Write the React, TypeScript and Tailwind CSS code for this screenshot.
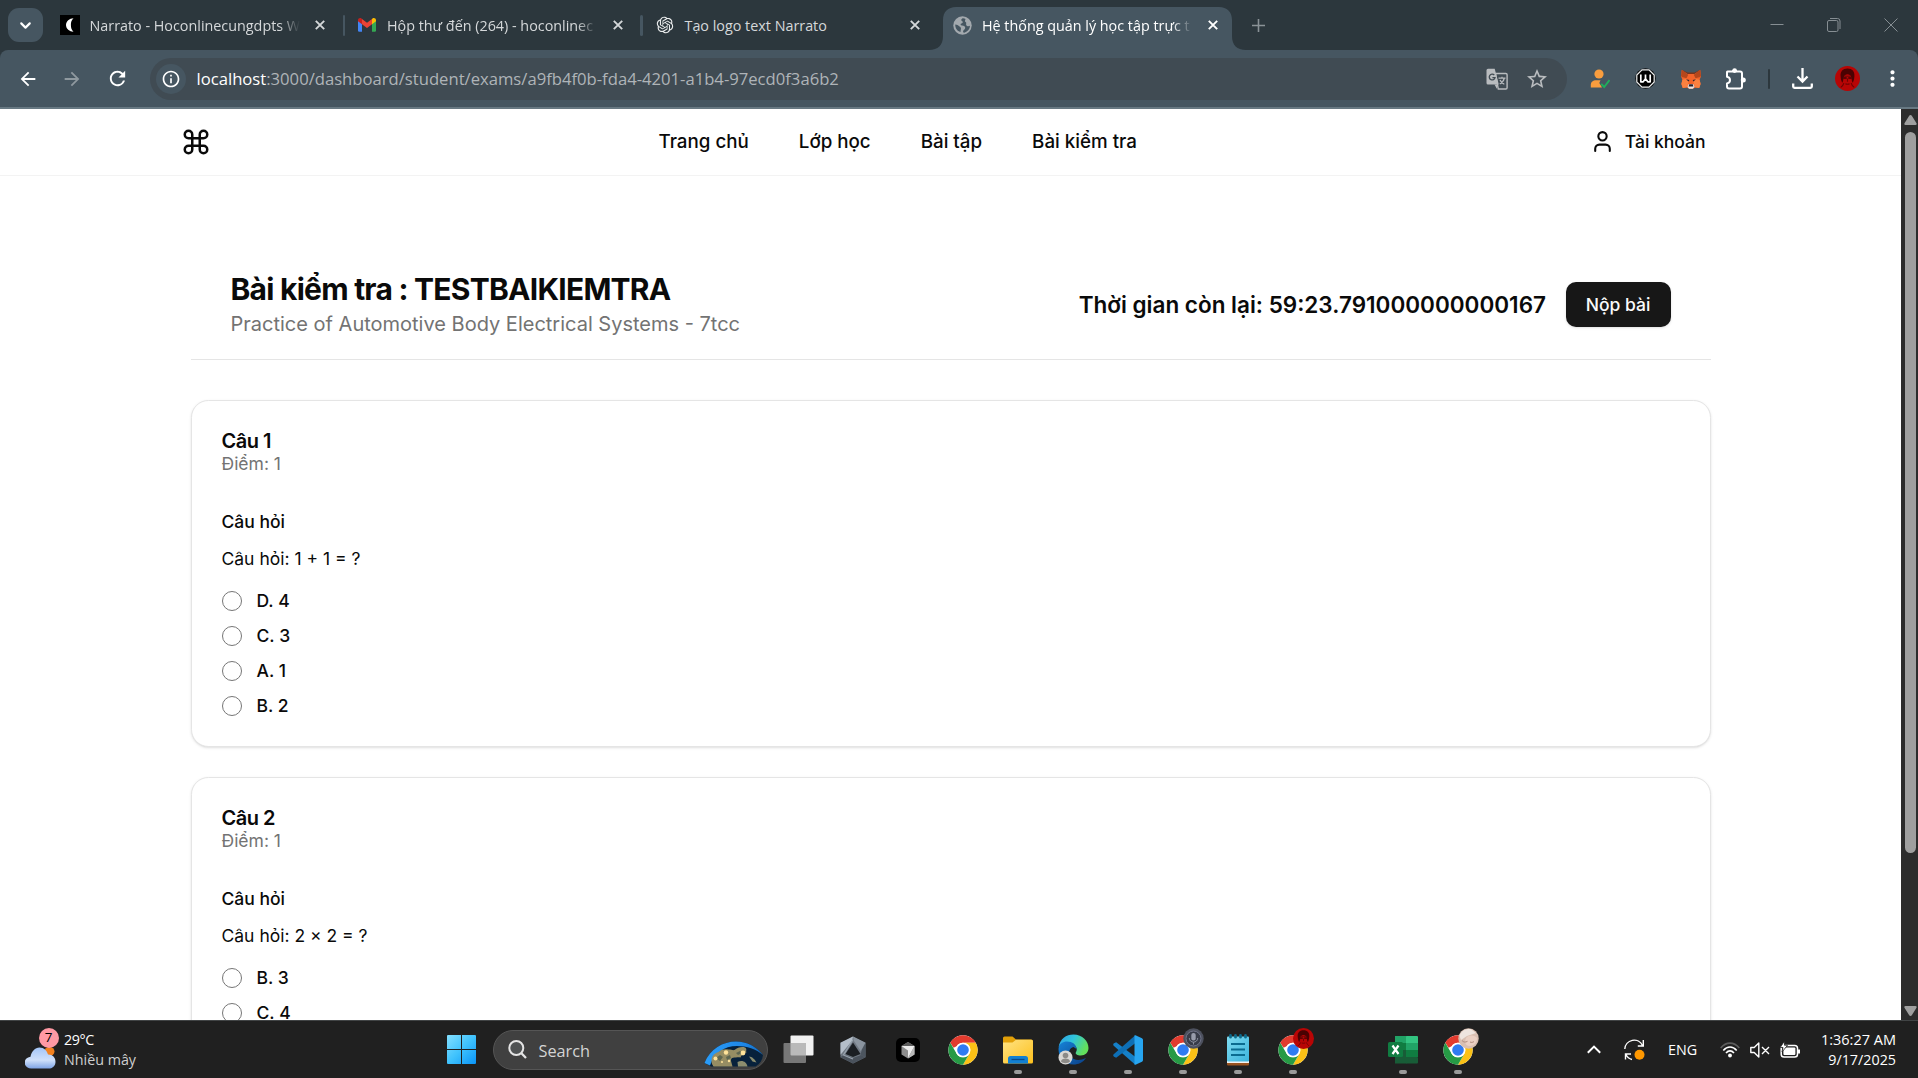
import type { ReactNode } from "react";
import { ChevronDown, Command, User } from "lucide-react";
import { MdArrowBack, MdArrowForward, MdInfoOutline, MdMoreVert, MdRefresh, MdStarBorder } from "react-icons/md";
import { RiOpenaiFill } from "react-icons/ri";

/* ---------- Favicons ---------- */

function NarratoIcon() {
  return (
    <svg width="20" height="20" viewBox="0 0 20 20">
      <rect width="20" height="20" fill="#000" />
      <path d="M13.500 3.200c-4 0-7.500 3-7.500 6.800s3.500 6.600 7.500 6.800c-2-1.800-2.600-4-2.600-6.800s.6-5 2.600-6.800z" fill="#fff" />
    </svg>
  );
}

function GmailIcon() {
  return (
    <svg width="20" height="20" viewBox="0 0 20 20">
      <path d="M1 5v10.500a1.200 1.200 0 0 0 1.200 1.200H5V8z" fill="#4285f4" />
      <path d="M19 5v10.500a1.200 1.200 0 0 1-1.200 1.200H15V8z" fill="#34a853" />
      <path d="M1 5.200C1 3.300 3.200 2.500 4.500 3.600L5 4v5.200L1 6.300z" fill="#c5221f" />
      <path d="M19 5.200c0-1.900-2.200-2.700-3.500-1.600L15 4v5.200l4-2.900z" fill="#fbbc04" />
      <path d="M5 4l5 3.800L15 4v5.200l-5 3.800-5-3.800z" fill="#ea4335" />
    </svg>
  );
}

function GlobeIcon() {
  return (
    <svg width="19" height="19" viewBox="0 0 19 19">
      <circle cx="9.500" cy="9.500" r="9.200" fill="#a3a9ae" />
      <path d="M9.600 2.300c-1.600.9-1.800 2.300-.5 2.900 1.700.7.300 2-.9 2.300-1.200.4-.7 1.900.8 1.900 2.200 0 3.300.9 3.200 2.400 0 1.600-1.400 1.700-2 3.200-.4 1 .2 1.800 1.100 1.700 3.600-1 5.600-3.600 5.700-6.900-1.700.8-3.300.3-3.800-.9-.5-1.400.7-2.200-.4-2.700-1.500-.7-.6-2.400-.2-3.300-1-.5-2-.7-3-.6z" fill="#465661" />
      <path d="M2.300 8.500c1.900.1 3.600 1.300 5 2.600 1.300 1.200.3 2.300.2 4.900-3.300-.8-5.500-3.900-5.200-7.500z" fill="#465661" />
    </svg>
  );
}

function CloseX({ bright = false }: { bright?: boolean }) {
  return (
    <svg width="10" height="10" viewBox="0 0 10 10" stroke={bright ? "#ffffff" : "#d4d7d9"} strokeWidth="1.900">
      <path d="M.8.8l8.400 8.400M9.200.8L.8 9.200" />
    </svg>
  );
}

function Tab({ icon, title, active = false, fade = false }: { icon: ReactNode; title: string; active?: boolean; fade?: boolean }) {
  return (
    <div className="relative flex h-[43px] w-[289.5px] shrink-0 items-start">
      {active && (
        <svg className="absolute -left-[14px] top-0" width="318" height="43" viewBox="0 0 318 43">
          <path d="M0 43c9 0 14-5 14-14V13C14 5 19 0 27 0h263c8 0 13 5 13 13v16c0 9 5 14 14 14z" fill="#465661" />
        </svg>
      )}
      <div className="relative flex h-9 w-full items-center pl-[9px]">
        <span className="flex w-5 shrink-0 justify-center">{icon}</span>
        <span
          className={
            "ml-[10px] w-[212px] shrink-0 whitespace-nowrap pt-[1.500px] font-['Open_Sans',sans-serif] text-[14.35px] leading-6 " +
            (fade ? "[mask-image:linear-gradient(90deg,#000_190px,transparent_210px)] " : "") +
            (active ? "text-white" : "text-[#d5d8da]")
          }
        >
          {title}
        </span>
        <span className="ml-[13.500px]">
          <CloseX bright={active} />
        </span>
      </div>
    </div>
  );
}

function TabDivider({ hidden = false }: { hidden?: boolean }) {
  return (
    <div className="flex h-9 w-2 shrink-0 items-center justify-center self-start">
      {!hidden && <div className="h-[21px] w-[2.500px] rounded-full bg-[#465661]" />}
    </div>
  );
}

function TabStrip() {
  return (
    <div className="flex h-[50px] items-center bg-[#2c373d]">
      <div className="ml-2 flex h-[34px] w-[35px] items-center justify-center rounded-[11px] bg-[#465661] text-white">
        <ChevronDown size={17} strokeWidth={3} />
      </div>
      <div className="ml-[7.500px] flex items-center self-end">
        <Tab icon={<NarratoIcon />} title="Narrato - Hoconlinecungdpts W" fade />
        <TabDivider />
        <Tab icon={<GmailIcon />} title="Hộp thư đến (264) - hoconlinec" fade />
        <TabDivider />
        <Tab icon={<RiOpenaiFill size={20} color="#eceeef" />} title="Tạo logo text Narrato" />
        <TabDivider hidden />
        <Tab icon={<GlobeIcon />} title="Hệ thống quản lý học tập trực t" active fade />
      </div>
      <svg className="ml-[19px]" width="13" height="13" viewBox="0 0 13 13" stroke="#8a9297" strokeWidth="1.600">
        <path d="M6.500 0v13M0 6.500h13" />
      </svg>
      <div className="ml-auto mr-[20px] flex items-center gap-[43px]">
        <svg width="14" height="14" viewBox="0 0 14 14" stroke="#868e93" fill="none">
          <path d="M.5 6.500h13" />
        </svg>
        <svg width="14" height="14" viewBox="0 0 14 14" stroke="#868e93" fill="none">
          <rect x=".5" y="2.500" width="10.500" height="11" rx="1.500" />
          <path d="M3 .5h7.500a2.500 2.500 0 0 1 2.500 2.500v8" />
        </svg>
        <svg width="14" height="14" viewBox="0 0 14 14" stroke="#868e93" fill="none">
          <path d="M.5.5l13 13M13.500.5l-13 13" />
        </svg>
      </div>
    </div>
  );
}

/* ---------- Toolbar ---------- */

function TranslateIcon() {
  return (
    <svg width="22" height="22" viewBox="0 0 22 22">
      <path d="M9.500 5.500h10.300a1.300 1.300 0 0 1 1.300 1.300v12.900a1.300 1.300 0 0 1-1.300 1.300h-7.500z" fill="none" stroke="#b9bcbf" strokeWidth="1.400" />
      <path d="M2 .8h6.700l4.100 15.700H2A1.500 1.500 0 0 1 .5 15V2.300A1.500 1.500 0 0 1 2 .8z" fill="#b9bcbf" />
      <path d="M12 16.500l-1.200 4.300-2.300-4.300z" fill="#b9bcbf" />
      <path d="M8.300 7a2.900 2.900 0 1 0 .7 2.600H6.400" fill="none" stroke="#404b53" strokeWidth="1.300" />
      <path d="M12.500 10.200h7M16 8.800v1.400M18.300 10.200c-.5 2.600-2.400 4.600-4.500 5.700M14 12c.8 1.800 2.200 3.200 4.300 4.200" fill="none" stroke="#b9bcbf" strokeWidth="1.200" />
    </svg>
  );
}

function PersonCheckIcon() {
  return (
    <svg width="20" height="20" viewBox="0 0 20 20">
      <circle cx="9" cy="5" r="4.600" fill="#f99d3e" />
      <path d="M.8 18.500V16c0-3.200 2.300-4.800 5.200-4.800h4.500l-1.200 2.800 2.700 4.500z" fill="#f99d3e" />
      <path d="M11.200 14.800l3 3.200 5.300-7" fill="none" stroke="#1fae5b" strokeWidth="1.900" />
    </svg>
  );
}

function WIcon() {
  return (
    <svg width="21" height="21" viewBox="0 0 21 21">
      <circle cx="10.500" cy="10.500" r="10.200" fill="#0b0b0b" />
      <path d="M7 1.800h7l5.200 5.200v7L14 19.200H7L1.800 14V7z" fill="#000" stroke="#eef0f1" strokeWidth="1.200" />
      <path d="M5.800 6.500v7.300h2.400l2.300-3 2.300 3h2.400V6.500M10.500 6.500v4.300" fill="none" stroke="#fff" strokeWidth="1.700" strokeLinejoin="round" />
    </svg>
  );
}

function FoxIcon() {
  return (
    <svg width="20" height="20" viewBox="0 0 20 20">
      <path d="M.8.800L6.500 4.800h7L19.200.8 20 7.500l-1.400 3.200 1 4.300-1.400 4-4.200-.6-2 1.300H8l-2-1.300-4.200.6-1.400-4 1-4.300L0 7.500z" fill="#f4642a" />
      <path d="M.8.8l6.400 5-1.700 3.400L.8 8 0 6.500zM19.200.8l-6.400 5 1.700 3.400L19.200 8l.8-1.500z" fill="#b5471c" />
      <path d="M.8.8l6 4.300h6.400l6-4.300-5.700 2.700h-7z" fill="#78341c" />
      <path d="M1.400 10.700l4.600-.9 1.500 3.500L6 18.200l-4.200.8-1.400-4zM18.600 10.700l-4.600-.9-1.500 3.500 1.500 4.900 4.200.8 1.400-4z" fill="#fb8140" />
      <path d="M5 10.200l3.300.8-.7 1.500zM15 10.200l-3.300.8.7 1.500z" fill="#2b2530" />
      <path d="M7 16l1-1h4l1 1 .5 2-1.700 1.700H8.200L6.500 18z" fill="#e9e4e2" />
      <path d="M8.200 15.200h3.600l.6 2.200H7.600z" fill="#2b2028" />
    </svg>
  );
}

function PuzzleIcon() {
  return (
    <svg width="23" height="24" viewBox="0 0 23 24" fill="none" stroke="#fff" strokeWidth="2">
      <path d="M3.500 4.500H16a2 2 0 0 1 2 2V19.500a2 2 0 0 1-2 2H5a2 2 0 0 1-2-2V16.500c1.800-.3 3-1.700 3-3.400s-1.200-3.100-3-3.400V5z" strokeLinejoin="round" />
      <path d="M7.800 4.200a3 3 0 0 1 5.600 0zM18.300 10.200a3 3 0 0 1 0 5.600z" fill="#fff" stroke="none" />
      <circle cx="10.600" cy="3.600" r="2.300" fill="#fff" stroke="none" />
      <circle cx="19.300" cy="13" r="2.500" fill="#fff" stroke="none" />
    </svg>
  );
}

function RedAvatar({ size }: { size: number }) {
  return (
    <svg width={size} height={size} viewBox="0 0 24 24">
      <circle cx="12" cy="12" r="12" fill="#b80505" />
      <path d="M12 2.500c4.500 0 7 2.800 6.600 7.500-.2 3-1 5-1.600 6-.8-1-1-3-1.200-5-.8-2-2-3-3.800-3S9 9 8.200 11c-.2 2-.4 4-1.200 5-.6-1-1.400-3-1.600-6C5 5.300 7.500 2.500 12 2.500z" fill="#4a0202" />
      <path d="M7.500 10.500h3.700v2H8zM12.800 10.500h3.700l-.5 2h-3.200z" fill="#5f0202" />
      <path d="M8.500 9.300c2 .6 5 .6 7 0" stroke="#720404" fill="none" />
      <path d="M10 17c1.200.6 2.800.6 4 0M12 12v3M8.500 16.500c-.5 2-1.500 3-3 4M15.500 16.500c.5 2 1.500 3 3 4" stroke="#6e0303" strokeWidth="1.100" fill="none" />
    </svg>
  );
}

function Slot({ w, children }: { w: string; children: ReactNode }) {
  return <div className={"flex shrink-0 items-center justify-center " + w}>{children}</div>;
}

function Toolbar() {
  return (
    <div className="bg-[#2c373d]">
      <div className="flex h-[59px] items-center rounded-t-lg border-b-2 border-[#687983] bg-[#465661]">
        <div className="flex w-[150px] items-center pl-[5.500px] text-white">
          <Slot w="w-[44px]"><MdArrowBack size={22} /></Slot>
          <Slot w="w-[45px]"><MdArrowForward size={22} color="#8f999f" /></Slot>
          <Slot w="w-[45px]"><MdRefresh size={23} /></Slot>
        </div>
        <div className="flex h-[42px] w-[1417px] items-center rounded-full bg-[#404b53]">
          <div className="ml-[5.500px] flex size-[30px] items-center justify-center rounded-full bg-[#465661] text-white">
            <MdInfoOutline size={20} />
          </div>
          <div className="ml-[11px] mt-[2px] whitespace-nowrap font-['Open_Sans',sans-serif] text-[16.65px] text-[#afb4b8]">
            <span className="text-white">localhost</span>:3000/dashboard/student/exams/a9fb4f0b-fda4-4201-a1b4-97ecd0f3a6b2
          </div>
          <div className="ml-auto mr-[18.500px] flex items-center gap-[17px]">
            <TranslateIcon />
            <MdStarBorder size={24} color="#b9bcbf" />
          </div>
        </div>
        <div className="flex items-center pl-[10px] text-white">
          <Slot w="w-[45px]"><PersonCheckIcon /></Slot>
          <Slot w="w-[46px]"><WIcon /></Slot>
          <Slot w="w-[45px]"><FoxIcon /></Slot>
          <Slot w="w-[45px]"><PuzzleIcon /></Slot>
          <Slot w="w-[21px]"><div className="h-5 w-[2px] rounded-full bg-[#2c373d]" /></Slot>
          <Slot w="w-[46px]">
            <svg width="21" height="21" viewBox="0 0 21 21" fill="none" stroke="#fff" strokeWidth="2.300">
              <path d="M10.500 0v13M5.500 8.500l5 5 5-5M1.200 15.500v3a1.300 1.300 0 0 0 1.300 1.300h16a1.300 1.300 0 0 0 1.300-1.300v-3" />
            </svg>
          </Slot>
          <Slot w="w-[45px]"><RedAvatar size={25} /></Slot>
          <Slot w="w-[44px]"><MdMoreVert size={25} /></Slot>
        </div>
      </div>
    </div>
  );
}

/* ---------- Page ---------- */

function SiteHeader() {
  return (
    <header className="flex h-[66.500px] shrink-0 items-center border-b border-[#f3f3f3] pl-[181px] pr-[195.500px] text-[#0a0a0a]">
      <div className="w-[477.500px]">
        <Command size={30} />
      </div>
      <nav className="flex gap-[50px] whitespace-nowrap text-[18.75px] font-medium leading-7">
        <span>Trang chủ</span>
        <span>Lớp học</span>
        <span>Bài tập</span>
        <span>Bài kiểm tra</span>
      </nav>
      <div className="ml-auto flex items-center gap-[10px] text-[17.5px] font-medium">
        <User size={25} />
        <span className="pt-px">Tài khoản</span>
      </div>
    </header>
  );
}

function Question({ n, text, options }: { n: number; text: string; options: string[] }) {
  return (
    <section className="shrink-0 rounded-[17.5px] border border-[#e5e5e5] bg-white p-[30px] text-[17.5px] leading-[25px] text-[#0a0a0a] shadow-[0_1px_3px_rgba(0,0,0,0.1),0_1px_2px_-1px_rgba(0,0,0,0.1)]">
      <h2 className="text-xl font-semibold leading-5 tracking-tight">Câu {n}</h2>
      <p className="text-[#737373]">Điểm: 1</p>
      <p className="mt-[31px] font-medium leading-[30px]">Câu hỏi</p>
      <p className="mt-[9px]">{text}</p>
      <div className="mt-5 flex flex-col gap-[15px]">
        {options.map((o) => (
          <label key={o} className="flex h-5 items-center gap-[15px] font-medium">
            <span className="size-5 rounded-full border border-[#767676] bg-white" />
            <span className="pb-[2px]">{o}</span>
          </label>
        ))}
      </div>
    </section>
  );
}

function Page() {
  return (
    <div className="flex h-[911px]">
      <div className="flex w-[1901px] flex-col overflow-hidden bg-white font-['Inter',sans-serif]">
        <SiteHeader />
        <main className="flex min-h-0 flex-1 flex-col gap-[30px] overflow-hidden px-[190.500px] pt-[93.500px]">
          <div className="mb-[10px] flex h-[91px] shrink-0 items-start justify-between border-b border-[#e5e5e5] px-10 text-[#0a0a0a]">
            <div>
              <h1 className="text-3xl font-bold leading-10 tracking-tight">Bài kiểm tra : TESTBAIKIEMTRA</h1>
              <p className="text-xl leading-[30px] text-[#737373]">Practice of Automotive Body Electrical Systems - 7tcc</p>
            </div>
            <div className="flex h-[70px] items-center gap-[19.500px]">
              <div className="pt-[2px] text-[22.5px] font-semibold">Thời gian còn lại: 59:23.791000000000167</div>
              <button className="h-[45px] w-[105px] rounded-[10px] bg-[#171717] pt-[2px] text-[17.5px] font-medium text-[#fafafa] shadow">Nộp bài</button>
            </div>
          </div>
          <Question n={1} text="Câu hỏi: 1 + 1 = ?" options={["D. 4", "C. 3", "A. 1", "B. 2"]} />
          <Question n={2} text="Câu hỏi: 2 × 2 = ?" options={["B. 3", "C. 4"]} />
        </main>
      </div>
      <div className="flex w-[17px] flex-col items-center bg-[#2c2c2c] pl-[2px]">
        <svg className="mt-[6px]" width="13" height="10" viewBox="0 0 13 10" fill="#9f9f9f">
          <path d="M6.500 0c.6 0 1 .3 1.300.8l4.700 7.500c.5.900 0 1.700-1 1.700h-10c-1 0-1.500-.8-1-1.700L5.200.8c.3-.5.700-.8 1.300-.8z" />
        </svg>
        <div className="mt-[7px] h-[721px] w-[11px] rounded-full bg-[#9f9f9f]" />
        <svg className="mt-auto mb-[4px]" width="13" height="10" viewBox="0 0 13 10" fill="#9f9f9f">
          <path d="M6.500 10c.6 0 1-.3 1.300-.8l4.700-7.500c.5-.9 0-1.700-1-1.700h-10C.5 0 0 .8.5 1.700l4.700 7.500c.3.500.7.800 1.300.8z" />
        </svg>
      </div>
    </div>
  );
}

/* ---------- Taskbar ---------- */

function ChromeIcon() {
  return (
    <svg width="32" height="32" viewBox="0 0 48 48">
      <circle cx="24" cy="24" r="22" fill="#fff" />
      <path d="M4.950 13A22 22 0 0 1 43.050 13H24A11 11 0 0 0 14.500 18.500L9.800 20.500z" fill="#e33b2e" />
      <path d="M43.050 13A22 22 0 0 1 24 46L33.530 29.500A11 11 0 0 0 24 13z" fill="#fbc116" />
      <path d="M24 46A22 22 0 0 1 4.950 13L14.470 29.500A11 11 0 0 0 33.530 29.500z" fill="#269a45" />
      <circle cx="24" cy="24" r="11" fill="#fff" />
      <circle cx="24" cy="24" r="8.700" fill="#2f7bf2" />
    </svg>
  );
}

function ChromeWithBadge({ children }: { children: ReactNode }) {
  return (
    <div className="relative">
      <ChromeIcon />
      <div className="absolute -right-[5px] -top-[6px]">{children}</div>
    </div>
  );
}

function MicBadge() {
  return (
    <svg width="21" height="21" viewBox="0 0 21 21">
      <circle cx="10.500" cy="10.500" r="10.200" fill="#4d515e" />
      <circle cx="10.500" cy="10.500" r="7.500" fill="#383c49" stroke="#71758a" />
      <rect x="8.300" y="5" width="4.400" height="7.500" rx="2" fill="#989cab" />
      <path d="M6.300 10c0 5.500 8.400 5.500 8.400 0M10.500 14v2.500" stroke="#898d9c" fill="none" />
    </svg>
  );
}

function BabyBadge() {
  return (
    <svg width="21" height="21" viewBox="0 0 21 21">
      <circle cx="10.500" cy="10.500" r="10.200" fill="#d9bfb1" />
      <path d="M1.500 8C3 3 8 .3 13 1.200l5 3.800-9 3-6 4z" fill="#efe5df" />
      <path d="M8 10c3-3.500 9-3 11 0 0 5-3.500 8-7.500 8S6 14 8 10z" fill="#ebd0c3" />
      <path d="M4 12.500c1.500 1.800 3.500 2 5.500.8M12 14c1.500.7 3 .4 4-.5" stroke="#b18c7e" strokeWidth="1" fill="none" />
    </svg>
  );
}

function FolderIcon() {
  return (
    <svg width="30" height="30" viewBox="0 0 30 30">
      <defs>
        <linearGradient id="fold" x1="0" y1="0" x2="1" y2="1">
          <stop offset="0" stopColor="#ffe383" />
          <stop offset="1" stopColor="#fdc01d" />
        </linearGradient>
      </defs>
      <path d="M0 3a1.500 1.500 0 0 1 1.500-1.500h8L13 4.500h15a2 2 0 0 1 2 2v6H0z" fill="#e2a008" />
      <path d="M0 7.500h9.500L13 4.700h15.500A1.500 1.500 0 0 1 30 6.200v20.800a1.500 1.500 0 0 1-1.500 1.500h-27A1.500 1.500 0 0 1 0 27z" fill="url(#fold)" />
      <path d="M5 28.500v-5A2.500 2.500 0 0 1 7.500 21h15a2.500 2.500 0 0 1 2.500 2.500v5z" fill="#1280d2" />
      <path d="M8.500 24.500h13" stroke="#0a4a8a" strokeWidth="1.300" />
    </svg>
  );
}

function EdgeIcon() {
  return (
    <svg width="31" height="31" viewBox="0 0 31 31">
      <defs>
        <linearGradient id="edgeTop" x1="0" y1="0" x2="1" y2=".4">
          <stop offset="0" stopColor="#2f9fe5" />
          <stop offset=".5" stopColor="#30c5dc" />
          <stop offset="1" stopColor="#63df5c" />
        </linearGradient>
        <linearGradient id="edgeLow" x1="0" y1="0" x2="1" y2="1">
          <stop offset="0" stopColor="#1683d8" />
          <stop offset="1" stopColor="#0b3f86" />
        </linearGradient>
      </defs>
      <path d="M.6 13C2 5 8 .5 15.500.5 24.500.5 30.500 7 30.500 14c0 4.500-3.300 7.500-7.700 7.500-3.500 0-5.800-1.500-5-3 2.700-3.800-.3-8-5.300-8C7 8 2.500 10 .6 13z" fill="url(#edgeTop)" />
      <path d="M.5 15C1 9.500 5 7.500 9 7.500c5.500 0 9.500 3 9.500 7.500l-3-2c-4 1-5.500 5-3 9 3 4.500 9 5 15.500 2C25 28.500 20.500 30.500 15.500 30.500 7 30.500.5 24 .5 15z" fill="url(#edgeLow)" />
      <circle cx="7.500" cy="23.500" r="7" fill="#d9d7d4" />
      <circle cx="7.500" cy="21.500" r="2.800" fill="#8c8a87" />
      <path d="M3 27.500c0-4 9-4 9 0-2 2.200-7 2.200-9 0z" fill="#8c8a87" />
    </svg>
  );
}

function VsCodeIcon() {
  return (
    <svg width="30" height="30" viewBox="0 0 30 30">
      <path d="M22.500 22L3.200 7.200 1 8.300C0 9 0 10 .7 10.700L22 29.500z" fill="#1580c8" />
      <path d="M22.500 8L3.200 22.800 1 21.700C0 21 0 20 .7 19.300L22 .5z" fill="#0e6fb5" />
      <path d="M21.500.4c.5-.3 1-.2 1.500 0l6 2.900c.6.300 1 .9 1 1.600v20.200c0 .7-.4 1.300-1 1.600l-6 2.900c-.5.200-1 .300-1.500 0z" fill="#27a5f0" />
    </svg>
  );
}

function NotepadIcon() {
  return (
    <svg width="22" height="32" viewBox="0 0 22 32">
      <defs>
        <linearGradient id="np" x1="0" y1="0" x2="1" y2="1">
          <stop offset="0" stopColor="#7fdcf1" />
          <stop offset="1" stopColor="#3cb4dc" />
        </linearGradient>
      </defs>
      <rect y="26" width="22" height="5.500" rx="1" fill="#9a531f" />
      <rect y="25" width="22" height="4" fill="#f2f2f2" />
      <rect y="2.500" width="22" height="25" rx="1" fill="url(#np)" />
      {[3.5, 8.5, 13.5, 18.5].map((x) => (
        <rect key={x} x={x - 1.3} y="0" width="2.600" height="4.500" rx="1.300" fill="#0c6b8c" />
      ))}
      <path d="M4 10h14M4 15.500h14M4 21h14" stroke="#0b6c90" strokeWidth="1.900" />
    </svg>
  );
}

function ExcelIcon() {
  return (
    <svg width="30" height="30" viewBox="0 0 30 30">
      <rect x="7" y="1" width="12" height="9" fill="#21a366" />
      <rect x="18" y="1" width="12" height="9" rx="1" fill="#33c481" />
      <rect x="7" y="8" width="12" height="7.500" fill="#107c41" />
      <rect x="18" y="8" width="12" height="7.500" fill="#21a366" />
      <rect x="7" y="15" width="12" height="13.500" fill="#185c37" />
      <rect x="18" y="15" width="12" height="7" fill="#107c41" />
      <rect x="18" y="22" width="12" height="6.500" rx="1" fill="#185c37" />
      <rect y="7" width="15" height="15" rx="1.500" fill="#107c41" />
      <path d="M4.500 10.500l6 8.500M10.500 10.500l-6 8.500" stroke="#fff" strokeWidth="2.200" />
    </svg>
  );
}

function TaskViewIcon() {
  return (
    <svg width="31" height="29" viewBox="0 0 31 29">
      <rect x="7.500" y=".5" width="23" height="20" rx="1" fill="#f1f1f1" />
      <rect x=".5" y="8" width="22.500" height="20" rx="1" fill="#777" />
      <path d="M7.500 8H23v12.500H8.500a1 1 0 0 1-1-1z" fill="#b9b9b9" />
    </svg>
  );
}

function HexIcon() {
  return (
    <svg width="26" height="28" viewBox="0 0 26 28">
      <path d="M13 .5l12.500 6.300v14.400L13 27.500.5 21.200V6.800z" fill="#6f7883" />
      <path d="M13 .5L.5 6.800v12L12 5z" fill="#b4bec9" />
      <path d="M13 .5l12.500 6.300L22 17 14 5z" fill="#8a949f" />
      <path d="M25.500 6.800v14.400L20.500 19l1-5z" fill="#4c555f" />
      <path d="M.5 21.200L4 18.500l9 3.500 8-3 4.500 2.200L13 27.500z" fill="#4a525c" />
      <path d="M13 6.500L20.500 18 13 21l-7.500-3z" fill="#1a1e23" />
      <path d="M13 3.500L3.500 19l9.500 4" fill="none" stroke="#98a3ae" strokeWidth="1.300" />
    </svg>
  );
}

function CursorIcon() {
  return (
    <svg width="24" height="24" viewBox="0 0 24 24">
      <rect width="24" height="24" rx="5" fill="#000" />
      <path d="M12 4l6.500 4v8.500L12 20.500l-6.500-4V8z" fill="#8d8d8d" />
      <path d="M5.500 8L12 4l6.500 4z" fill="#5b5b5b" />
      <path d="M5.500 8h13L12 20v-7.500z" fill="#ececec" />
      <path d="M18.500 8v8.500L12 20.500z" fill="#b8b8b8" />
    </svg>
  );
}

function EarthArt() {
  return (
    <svg width="60" height="26" viewBox="0 0 60 26">
      <defs>
        <linearGradient id="rim" x1="0" y1="0" x2="1" y2="0">
          <stop offset="0" stopColor="#2b9df8" />
          <stop offset=".7" stopColor="#1d86e6" />
          <stop offset="1" stopColor="#1667b6" />
        </linearGradient>
      </defs>
      <path d="M.5 22C6 8 19 .5 32 .5c11 0 20 5 27 13.500-.5 5-3 9-7.500 11.500H7z" fill="#07213b" />
      <path d="M.5 22C6 8 19 .5 32 .5c11 0 20 5 27 13.500C52 8 43 5 33 5 20 5 10 12.500 6 24.500z" fill="url(#rim)" />
      <path d="M7.500 20c0-5 3-8 7-9 3-3 7-3 10-2.500 3 0 4 1 6 .5 3-2.500 7-3.500 10.500-2.500 2.500 1.500.5 3 1.500 5l-2.500.5c-.5 2-3 2-3.500 4.500-1.500-.5-3-.5-4.500 0-3-.5-5.500.5-5 3.500l1.500 5.500H9.500c-1-1.500-2-3-2-5.500z" fill="#968d63" />
      <path d="M12 17l4-3 3 2-3 4zM22 16l4-2 1 3-4 2zM32 12l4-2 2 2-4 2z" fill="#5d6650" />
      <path d="M45 15.500c3 0 6 3 7.500 6l-4-1zM33.500 21c5-2.500 9 0 10 4.500H34z" fill="#8b8d6e" />
      <g fill="#ffe39a">
        <circle cx="11.500" cy="17.500" r="2" /><circle cx="22" cy="11.500" r="2.200" /><circle cx="39" cy="12" r="2.400" /><circle cx="25" cy="20" r="1.200" /><circle cx="18" cy="21" r="1" />
      </g>
    </svg>
  );
}

function WeatherIcon() {
  return (
    <div className="relative h-9 w-[31px]">
      <svg className="absolute -bottom-[1px] left-0" width="31" height="22" viewBox="0 0 31 24" preserveAspectRatio="none">
        <defs>
          <linearGradient id="cloud" x1="0" y1="0" x2="0" y2="1">
            <stop offset="0" stopColor="#a3c5f7" />
            <stop offset=".6" stopColor="#cfe0fa" />
            <stop offset="1" stopColor="#7fa4e6" />
          </linearGradient>
        </defs>
        <circle cx="24.500" cy="5" r="5" fill="#f2801d" />
        <path d="M7 23.500A6.500 6.500 0 0 1 5.500 10.500C6.500 5 10 .5 14.500.5c4.500 0 7.500 3.500 8.500 7.700 4.500-.2 7.500 3.300 7.500 7.800 0 4.700-3 7.500-7 7.500z" fill="url(#cloud)" />
      </svg>
      <div className="absolute -right-[3px] -top-[4px] flex size-5 items-center justify-center rounded-full bg-[#ff99a4] text-[13.5px] text-black">7</div>
    </div>
  );
}

function TaskItem({ children, running = false }: { children: ReactNode; running?: boolean }) {
  return (
    <div className="relative flex h-full w-[55px] shrink-0 items-center justify-center">
      {children}
      {running && <div className="absolute bottom-[4px] h-1 w-2 rounded-full bg-[#9a9a9a]" />}
    </div>
  );
}

function Taskbar() {
  return (
    <div className="flex h-[58px] items-center border-t border-[#414445] bg-[#202020] font-['Open_Sans',sans-serif] text-[14.3px] text-white">
      <div className="flex w-[447px] items-center pl-[24.500px]">
        <WeatherIcon />
        <div className="ml-[8.500px] leading-5">
          <div className="tracking-[-0.4px]">29°C</div>
          <div className="text-[#cfcfcf]">Nhiều mây</div>
        </div>
      </div>
      <svg width="29" height="29" viewBox="0 0 29 29">
        <defs>
          <linearGradient id="win" x1="0" y1="0" x2="1" y2="1">
            <stop offset="0" stopColor="#84e0ff" />
            <stop offset=".5" stopColor="#3fc2fd" />
            <stop offset="1" stopColor="#0a94f7" />
          </linearGradient>
        </defs>
        <path d="M1 0h13v14H0V1a1 1 0 0 1 1-1zM15 0h13a1 1 0 0 1 1 1v13H15zM0 15h14v14H1a1 1 0 0 1-1-1zM15 15h14v13a1 1 0 0 1-1 1H15z" fill="url(#win)" />
      </svg>
      <div className="ml-[17px] flex h-10 w-[275px] items-center rounded-full border border-[#555] bg-[#404040] pl-[13.500px]">
        <svg width="19" height="19" viewBox="0 0 19 19" fill="none" stroke="#e4e4e4" strokeWidth="2">
          <circle cx="8.300" cy="8" r="7" fill="#4f5253" />
          <path d="M13.200 13l4.800 5" strokeWidth="2.300" />
        </svg>
        <span className="ml-[12px] pt-[3px] text-[16.3px] text-[#d4d4d4]">Search</span>
        <span className="ml-auto mr-[3px] mt-[9px]">
          <EarthArt />
        </span>
      </div>
      <div className="ml-[2.500px] flex h-full items-center">
        <TaskItem><TaskViewIcon /></TaskItem>
        <TaskItem><HexIcon /></TaskItem>
        <TaskItem><CursorIcon /></TaskItem>
        <TaskItem><ChromeIcon /></TaskItem>
        <TaskItem running><FolderIcon /></TaskItem>
        <TaskItem running><EdgeIcon /></TaskItem>
        <TaskItem running><VsCodeIcon /></TaskItem>
        <TaskItem running><ChromeWithBadge><MicBadge /></ChromeWithBadge></TaskItem>
        <TaskItem running><NotepadIcon /></TaskItem>
        <TaskItem running><ChromeWithBadge><RedAvatar size={21} /></ChromeWithBadge></TaskItem>
        <div className="w-[55px]" />
        <TaskItem running><ExcelIcon /></TaskItem>
        <TaskItem running><ChromeWithBadge><BabyBadge /></ChromeWithBadge></TaskItem>
      </div>
      <div className="ml-auto flex items-center pr-[22px]">
        <svg width="14" height="9" viewBox="0 0 14 9" fill="none" stroke="#fff" strokeWidth="2">
          <path d="M.8 7.800L7 1.600l6.200 6.200" />
        </svg>
        <svg className="ml-[22.500px]" width="22" height="22" viewBox="0 0 22 22" fill="none" stroke="#fff" strokeWidth="1.400">
          <path d="M.8 10A9.300 9.300 0 0 1 18.500 6.500M19.300 1v6h-5.500M8 20.500A9 9 0 0 1 2 15.500M1.500 20.500V15h5.500" />
          <circle cx="15.500" cy="15.800" r="5" fill="#ff9800" stroke="none" />
        </svg>
        <span className="ml-[22.500px] w-[30px] pt-px">ENG</span>
        <svg className="ml-[22px]" width="20" height="16" viewBox="0 0 20 16" fill="none" stroke="#fff" strokeWidth="1.600">
          <path d="M.7 6C6-.5 14-.5 19.300 6" stroke="#5c5c5c" />
          <path d="M3.300 8.500c4-4.600 9.400-4.600 13.400 0M6 11c2.500-2.800 5.500-2.800 8 0" />
          <circle cx="10" cy="13.500" r="1.900" fill="#fff" stroke="none" />
        </svg>
        <svg className="ml-[10px]" width="20" height="16" viewBox="0 0 20 16" fill="none" stroke="#fff" strokeWidth="1.400">
          <path d="M.8 5.500h3.400L8.800 1v14l-4.600-4.500H.8zM12 5l7 7M19 5l-7 7" strokeLinejoin="round" />
        </svg>
        <svg className="ml-[10px]" width="21" height="18" viewBox="0 0 21 18">
          <rect x="1.200" y="4.500" width="16.300" height="11.500" rx="2.800" fill="none" stroke="#fff" strokeWidth="1.500" />
          <path d="M18 8.500h2v4h-2z" fill="#fff" />
          <rect x="3.400" y="6.500" width="12" height="7.500" rx="1" fill="#fff" />
          <path d="M4.500 0L.2 6.500h2.800L2 11 7.500 4.300H4.500z" fill="#fff" stroke="#202020" strokeWidth=".8" />
        </svg>
        <div className="ml-[19px] w-[76px] text-right leading-5">
          <div className="whitespace-nowrap text-[14.5px]">1:36:27 AM</div>
          <div>9/17/2025</div>
        </div>
      </div>
    </div>
  );
}

export default function App() {
  return (
    <div className="flex h-[1078px] w-[1918px] flex-col overflow-hidden bg-white">
      <TabStrip />
      <Toolbar />
      <Page />
      <Taskbar />
    </div>
  );
}
